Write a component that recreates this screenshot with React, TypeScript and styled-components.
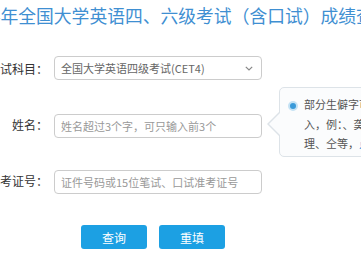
import React from 'react';
import styled, { createGlobalStyle } from 'styled-components';

const GlobalStyle = createGlobalStyle`
    html, body {
        margin: 0;
        padding: 0;
        background: #fff;
        overflow: hidden;
    }
    body {
        font-family: 'Noto Sans CJK SC', 'Noto Sans', sans-serif;
    }
`;

const Page = styled.div`
    width: 361px;
    height: 271px;
    overflow: hidden;
`;

const Title = styled.h2`
    margin: 0 0 0 -39px;
    white-space: nowrap;
    font-size: 17.8px;
    font-weight: 400;
    line-height: 30px;
    color: #3f8fd2;
`;

const Form = styled.form`
    display: flex;
    flex-direction: column;
    gap: 32px;
    margin-top: 26px;
`;

const Row = styled.div`
    display: flex;
    align-items: center;
    height: 24px;
`;

const Label = styled.label`
    width: 60px;
    margin-left: -12px;
    margin-right: 6px;
    display: flex;
    justify-content: flex-end;
    white-space: nowrap;
    font-size: 12px;
    color: #333;
`;

const FieldWrap = styled.div`
    position: relative;
    width: 208px;
    height: 24px;
`;

const Input = styled.input`
    box-sizing: border-box;
    width: 100%;
    height: 100%;
    border: 1px solid #ccc;
    border-radius: 4px;
    padding: 0 6px;
    font-family: inherit;
    font-size: 11px;
    color: #555;
    outline: none;
    &::placeholder {
        color: #999;
    }
`;

const SelectBox = styled.div`
    box-sizing: border-box;
    width: 100%;
    height: 100%;
    border: 1px solid #ccc;
    border-radius: 4px;
    padding: 0 8px 0 6px;
    display: flex;
    align-items: center;
    justify-content: space-between;
    font-size: 11px;
    color: #666;
`;

const Tip = styled.div`
    position: absolute;
    left: calc(100% + 17px);
    top: -25px;
    box-sizing: border-box;
    width: 200px;
    height: 70px;
    padding: 7px 0 0 24px;
    border: 1px solid #dde3e8;
    border-radius: 5px;
    background: #fbfcfd;
    font-size: 11px;
    line-height: 19.5px;
    color: #555;
    white-space: nowrap;

    &::before,
    &::after {
        content: '';
        position: absolute;
        top: 24px;
        border-style: solid;
        border-color: transparent;
    }
    &::before {
        left: -25px;
        border-width: 12px;
        border-right-color: #dde3e8;
    }
    &::after {
        left: -23px;
        border-width: 12px;
        border-right-color: #fbfcfd;
    }
`;

const Dot = styled.span`
    position: absolute;
    left: 8px;
    top: 13px;
    width: 6px;
    height: 6px;
    border-radius: 50%;
    background: #3a9ad9;
    border: 2px solid #c4e2f4;
`;

const TipLink = styled.span`
    color: #2a8ed6;
`;

const Buttons = styled.div`
    display: flex;
    gap: 12px;
    margin: 33px 0 0 81px;
`;

const Button = styled.button`
    width: 66px;
    height: 24px;
    border: none;
    border-radius: 3px;
    background: #1ca0e3;
    color: #fff;
    font-family: inherit;
    font-size: 12px;
    padding: 0;
`;

function Chevron() {
    return (
        <svg width="8" height="5" viewBox="0 0 8 5">
            <path d="M0.8 0.8 L4 4 L7.2 0.8" fill="none" stroke="#888" strokeWidth="1.2" />
        </svg>
    );
}

export default function App() {
    return (
        <Page>
            <GlobalStyle />
            <Title>2024年全国大学英语四、六级考试（含口试）成绩查询</Title>
            <Form>
                <Row>
                    <Label>考试科目：</Label>
                    <FieldWrap>
                        <SelectBox>
                            <span>全国大学英语四级考试(CET4)</span>
                            <Chevron />
                        </SelectBox>
                    </FieldWrap>
                </Row>
                <Row>
                    <Label>姓名：</Label>
                    <FieldWrap>
                        <Input placeholder="姓名超过3个字，可只输入前3个" />
                        <Tip>
                            <Dot />
                            部分生僻字可用拼音代替输
                            <br />
                            入，例：、䶮、堃等字可处
                            <br />
                            理、仝等，<TipLink>点击查看</TipLink>
                        </Tip>
                    </FieldWrap>
                </Row>
                <Row>
                    <Label>准考证号：</Label>
                    <FieldWrap>
                        <Input placeholder="证件号码或15位笔试、口试准考证号" />
                    </FieldWrap>
                </Row>
            </Form>
            <Buttons>
                <Button type="button">查询</Button>
                <Button type="button">重填</Button>
            </Buttons>
        </Page>
    );
}
